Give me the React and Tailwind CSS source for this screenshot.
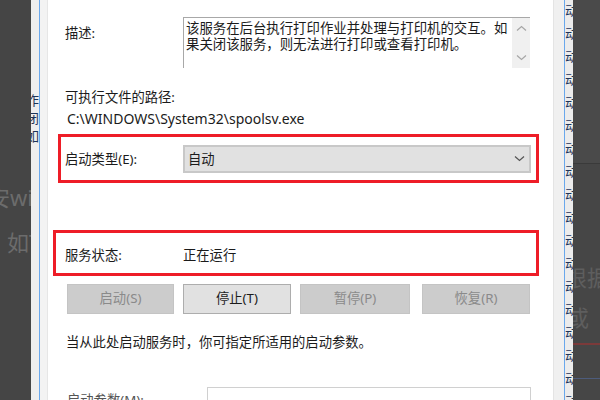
import React from "react";

const FONT = { fontFamily: '"Noto Sans", "Noto Sans CJK SC", sans-serif' };

function Chevron({ dir = "down", className = "" }) {
  return (
    <svg width="11" height="7" viewBox="0 0 11 7" className={className}>
      {dir === "down" ? (
        <path d="M1 1.5 L5.5 5.5 L10 1.5" fill="none" stroke="currentColor" strokeWidth="1.2" />
      ) : (
        <path d="M1 5.5 L5.5 1.5 L10 5.5" fill="none" stroke="currentColor" strokeWidth="1.2" />
      )}
    </svg>
  );
}

function Btn({ children, disabled, className = "" }) {
  return (
    <div
      className={
        "h-[30px] flex items-center justify-center border text-[13.3px] shrink-0 " +
        (disabled
          ? "bg-[#cccccc] border-[#c4c4c4] text-[#8a8a8a] "
          : "bg-[#e1e1e1] border-[#adadad] text-[#1b1b1b] ") +
        className
      }
    >
      {children}
    </div>
  );
}

export default function App() {
  const rightGlyphs = Array.from({ length: 18 });
  return (
    <div className="w-[600px] h-[400px] overflow-hidden flex bg-white text-[#1b1b1b]" style={FONT}>
      {/* left dark background */}
      <div className="w-[31px] h-full bg-[#454545] overflow-hidden flex flex-col text-[#6c6c6c] text-[22px] shrink-0">
        <div className="mt-[183px] ml-[-12px] whitespace-nowrap leading-[28px] shrink-0">安wi</div>
        <div className="mt-[17px] ml-[7px] whitespace-nowrap leading-[28px] shrink-0">如T</div>
      </div>
      {/* left partial window strip */}
      <div className="w-[8px] h-full bg-[#eeeeee] overflow-hidden flex flex-col items-end text-[13px] text-[#1d3358] shrink-0">
        <div className="mt-[91px] leading-[18px] whitespace-nowrap">作</div>
        <div className="leading-[18px] whitespace-nowrap">闭</div>
        <div className="leading-[18px] whitespace-nowrap">如</div>
      </div>
      <div className="w-[1px] h-full bg-[#6aa8ec] shrink-0" />
      <div className="w-[8px] h-full bg-[#f3f3f3] border-r border-[#e6e6e6] shrink-0" />

      {/* dialog content */}
      <div className="w-[505px] h-full bg-white flex flex-col text-[13.3px] shrink-0 overflow-hidden">
        {/* description */}
        <div className="mt-[17px] h-[51px] flex shrink-0">
          <div className="w-[135px] pl-[17px] pt-[7px] leading-[18px]">描述:</div>
          <div className="w-[347px] h-[51px] border-t border-l border-[#a8a8a8] flex">
            <div className="flex-1 pl-[2px] pt-[3px] leading-[15.5px] whitespace-nowrap text-[13.4px]">
              该服务在后台执行打印作业并处理与打印机的交互。如
              <br />
              果关闭该服务，则无法进行打印或查看打印机。
            </div>
            <div className="w-[18px] bg-[#f0f0f0] flex flex-col items-center justify-between py-[7px] text-[#a6a6a6]">
              <Chevron dir="up" />
              <Chevron dir="down" />
            </div>
          </div>
        </div>

        <div className="mt-[20px] pl-[17px] leading-[18px] shrink-0">可执行文件的路径:</div>
        <div className="mt-[4px] pl-[19px] leading-[18px] text-[14px] shrink-0">C:\WINDOWS\System32\spoolsv.exe</div>

        {/* startup type box */}
        <div className="mt-[6px] ml-[10px] w-[481px] h-[49px] border-[3px] border-[#ee1d27] flex items-center shrink-0">
          <div className="w-[122px] pl-[4px] leading-[18px]">启动类型(E):</div>
          <div className="w-[348px] h-[28px] bg-[#e1e1e1] border-2 border-[#c8c8c8] flex items-center justify-between pl-[3px] pr-[4px]">
            <span className="leading-[18px]">自动</span>
            <Chevron dir="down" className="text-[#555555]" />
          </div>
        </div>

        {/* status box */}
        <div className="mt-[47px] ml-[5px] w-[486px] h-[46px] border-[3px] border-[#ee1d27] flex items-center shrink-0">
          <div className="w-[127px] pl-[9px] leading-[18px] pt-[4px]">服务状态:</div>
          <div className="leading-[18px] pt-[4px]">正在运行</div>
        </div>

        {/* buttons */}
        <div className="mt-[8px] flex shrink-0">
          <Btn disabled className="ml-[19px] w-[107px]">启动(S)</Btn>
          <Btn className="ml-[9px] w-[108px]">停止(T)</Btn>
          <Btn disabled className="ml-[9px] w-[110px]">暂停(P)</Btn>
          <Btn disabled className="ml-[12px] w-[108px]">恢复(R)</Btn>
        </div>

        <div className="mt-[19px] pl-[18px] leading-[18px] whitespace-nowrap shrink-0">
          当从此处启动服务时，你可指定所适用的启动参数。
        </div>

        {/* start params */}
        <div className="mt-[36px] flex shrink-0">
          <div className="w-[159px] pl-[19px] pt-[4px] leading-[18px] text-[#555555]">启动参数(M):</div>
          <div className="w-[324px] h-[30px] border border-[#d0d0d0] bg-white" />
        </div>
      </div>

      <div className="w-[11px] h-full bg-[#f0f0f0] border-l border-[#e4e4e4] shrink-0" />
      <div className="w-[1px] h-full bg-[#6aa8ec] shrink-0" />
      {/* right partial window strip */}
      <div className="w-[8px] h-full bg-[#ececec] overflow-hidden flex flex-col text-[13px] text-[#1d3358] shrink-0">
        {rightGlyphs.map((_, i) => (
          <div key={i} className="h-[23px] leading-[23px] whitespace-nowrap shrink-0 first:mt-[-1px]">
            动
          </div>
        ))}
      </div>
      {/* right dark background */}
      <div className="w-[27px] h-full overflow-hidden flex flex-col shrink-0">
        <div className="h-[164px] bg-[#4a4a4a] border-b border-[#3a3a3a] shrink-0" />
        <div className="flex-1 bg-[#464646] flex flex-col text-[22px] text-[#5e5e5e]">
          <div className="mt-[99px] ml-[-8px] leading-[28px] whitespace-nowrap shrink-0">根据</div>
          <div className="mt-[12px] ml-[-6px] leading-[28px] whitespace-nowrap shrink-0">或</div>
          <div className="mt-[12px] h-[2px] bg-[#7b3a3a] shrink-0" />
          <div className="mt-[33px] h-[1px] bg-[#4d5c7c] shrink-0" />
        </div>
      </div>
    </div>
  );
}
